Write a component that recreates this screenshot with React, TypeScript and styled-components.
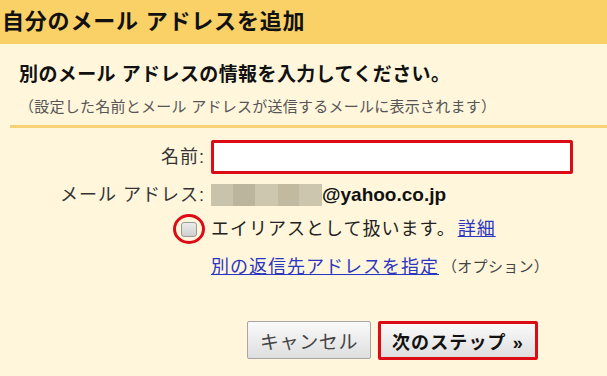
import React from 'react';
import styled, { createGlobalStyle } from 'styled-components';

const GlobalStyle = createGlobalStyle`
    html, body {
        margin: 0;
        padding: 0;
        background: #fff6dc;
        font-family: "Liberation Sans", "Noto Sans CJK JP", sans-serif;
        color: #222;
    }
`

const Page = styled.div`
    width: 607px;
    height: 376px;
    overflow: hidden;
    background: #fff6dc;
`

const Header = styled.div`
    height: 44px;
    background: #f9d166;
    padding-left: 2px;
    font-size: 22px;
    font-weight: 700;
    line-height: 44px;
    letter-spacing: 0.8px;
    color: #111;
    white-space: nowrap;
`

const Intro = styled.div`
    padding: 19px 0 0 19px;
`

const Subtitle = styled.div`
    font-size: 19px;
    font-weight: 700;
    line-height: 24px;
    letter-spacing: 0.4px;
    color: #111;
    white-space: nowrap;
`

const Note = styled.div`
    margin-top: 10px;
    font-size: 15px;
    line-height: 20px;
    letter-spacing: 0.25px;
    color: #555;
    white-space: nowrap;
`

const Divider = styled.div`
    margin: 8px 0 0 10px;
    height: 3px;
    background: #f6d275;
`

const Row = styled.div<{ $top: number; $height: number }>`
    display: grid;
    grid-template-columns: 205px 1fr;
    column-gap: 6px;
    align-items: center;
    margin-top: ${p => p.$top}px;
    height: ${p => p.$height}px;
`

const Label = styled.div`
    text-align: right;
    font-size: 18px;
    line-height: 24px;
    letter-spacing: 1px;
    color: #333;
    white-space: nowrap;
`

const CheckCell = styled.div`
    display: flex;
    justify-content: flex-end;
    padding-right: 8px;
`

const NameInput = styled.input`
    box-sizing: border-box;
    width: 362px;
    height: 34px;
    border: 3px solid #dc0b16;
    border-radius: 2px;
    background: #fff;
    outline: none;
    font-size: 16px;
    padding: 0 6px;
`

const Field = styled.div`
    display: flex;
    align-items: center;
    font-size: 18px;
    line-height: 24px;
    letter-spacing: 1px;
    color: #222;
    white-space: nowrap;
`

const Masked = styled.span`
    display: inline-block;
    width: 111px;
    height: 22px;
    background: linear-gradient(90deg,
        #c9c3ac 0 22px, #bcb59d 22px 44px, #cdc7af 44px 67px,
        #c1baa1 67px 88px, #ccc6ae 88px 111px);
`

const Domain = styled.span`
    font-weight: 700;
    font-size: 19px;
    letter-spacing: 0;
    color: #111;
`

const CheckWrap = styled.span`
    position: relative;
    display: inline-block;
    width: 16px;
    height: 15px;
`

const CheckBox = styled.span`
    display: block;
    box-sizing: border-box;
    width: 16px;
    height: 15px;
    border: 1px solid #9a9a9a;
    border-radius: 3px;
    background: linear-gradient(#ececec, #cfcfcf);
`

const RedRing = styled.span`
    position: absolute;
    left: -8px;
    top: -8px;
    width: 32px;
    height: 30px;
    box-sizing: border-box;
    border: 3px solid #dc0b16;
    border-radius: 50%;
`

const Link = styled.a`
    color: #2b35c0;
    text-decoration: underline;
    cursor: pointer;
`

const Gap = styled.span`
    display: inline-block;
    width: 2px;
`

const Small = styled.span`
    font-size: 15px;
    letter-spacing: 0.3px;
    color: #444;
    margin-left: 3px;
`

const Buttons = styled.div`
    display: flex;
    gap: 7px;
    margin: 42px 0 0 247px;
`

const Button = styled.button<{ $primary?: boolean }>`
    box-sizing: border-box;
    height: ${p => (p.$primary ? 39 : 38)}px;
    padding: 0 ${p => (p.$primary ? 11 : 12)}px;
    border: ${p => (p.$primary ? '3px solid #dc0b16' : '1px solid #a5a5a5')};
    border-radius: 2px;
    background: linear-gradient(#fafafa, #dedede);
    font-family: "Liberation Sans", "Noto Sans CJK JP", sans-serif;
    font-size: ${p => (p.$primary ? 18 : 19)}px;
    font-weight: ${p => (p.$primary ? 700 : 400)};
    letter-spacing: ${p => (p.$primary ? 1.1 : 0.6)}px;
    color: ${p => (p.$primary ? '#111' : '#444')};
    white-space: nowrap;
`

const App = () => {
    return (
        <Page>
            <GlobalStyle />
            <Header>{"自分のメール アドレスを追加"}</Header>
            <Intro>
                <Subtitle>{"別のメール アドレスの情報を入力してください。"}</Subtitle>
                <Note>{"（設定した名前とメール アドレスが送信するメールに表示されます）"}</Note>
            </Intro>
            <Divider />
            <Row $top={12} $height={34}>
                <Label>{"名前:"}</Label>
                <NameInput />
            </Row>
            <Row $top={9} $height={24}>
                <Label>{"メール アドレス:"}</Label>
                <Field>
                    <Masked />
                    <Domain>{"@yahoo.co.jp"}</Domain>
                </Field>
            </Row>
            <Row $top={10} $height={24}>
                <CheckCell>
                    <CheckWrap>
                        <CheckBox />
                        <RedRing />
                    </CheckWrap>
                </CheckCell>
                <Field>
                    {"エイリアスとして扱います。"}<Gap /><Link>{"詳細"}</Link>
                </Field>
            </Row>
            <Row $top={14} $height={24}>
                <div />
                <Field>
                    <Link>{"別の返信先アドレスを指定"}</Link>
                    <Small>{"（オプション）"}</Small>
                </Field>
            </Row>
            <Buttons>
                <Button>{"キャンセル"}</Button>
                <Button $primary>{"次のステップ »"}</Button>
            </Buttons>
        </Page>
    );
}

export default App;
